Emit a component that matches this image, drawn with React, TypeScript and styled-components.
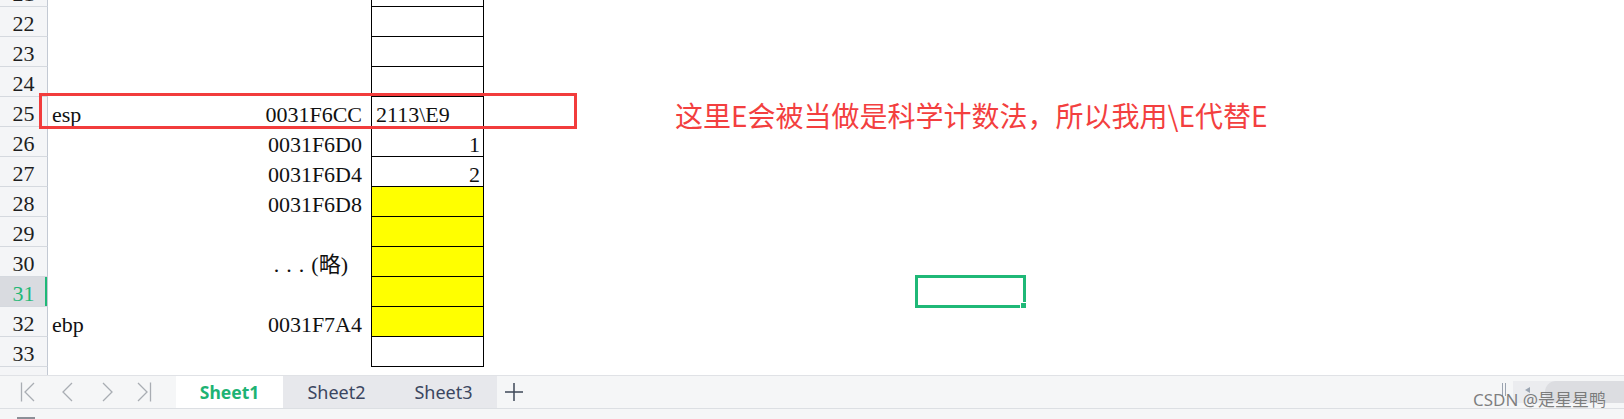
import React from 'react';
import styled, { createGlobalStyle } from 'styled-components';

const Global = createGlobalStyle`
  html, body { margin: 0; padding: 0; background: #ffffff; }
  body { width: 1624px; height: 419px; overflow: hidden; }
`;

const Page = styled.div`
  position: relative;
  width: 1624px;
  height: 419px;
  overflow: hidden;
  display: flex;
  flex-direction: column;
  background: #ffffff;
`;

const Grid = styled.div`
  flex: none;
  height: 375px;
  overflow: hidden;
`;

const Rows = styled.div`
  margin-top: -23px;
  display: flex;
  flex-direction: column;
`;

const Row = styled.div`
  display: grid;
  grid-template-columns: 48px 192px 131px 113px 1fr;
  height: 30px;
  font-family: 'Liberation Serif', 'Noto Sans CJK SC', serif;
  font-size: 22px;
  color: #111111;
`;

const RowHead = styled.div<{ $selected?: boolean }>`
  box-sizing: border-box;
  display: flex;
  align-items: flex-end;
  justify-content: center;
  line-height: 22px;
  padding-bottom: 1px;
  background: ${(p) => (p.$selected ? '#d9dbe0' : '#f4f5f7')};
  color: ${(p) => (p.$selected ? '#1fb877' : '#1e1e1e')};
  border-bottom: 1px solid #d5d9df;
  border-right: 1px solid #c3c9d3;
  box-shadow: ${(p) => (p.$selected ? 'inset -2px 0 0 #1fb877' : 'none')};
`;

const Cell = styled.div<{ $align?: 'left' | 'right'; $pad?: number }>`
  box-sizing: border-box;
  display: flex;
  align-items: flex-end;
  justify-content: ${(p) => (p.$align === 'right' ? 'flex-end' : 'flex-start')};
  line-height: 22px;
  padding: 0 ${(p) => (p.$align === 'right' ? p.$pad ?? 9 : 0)}px 1px
    ${(p) => (p.$align === 'right' ? 0 : p.$pad ?? 4)}px;
  white-space: nowrap;
`;

const BoxCell = styled.div<{ $boxed: boolean; $fill?: boolean; $align?: 'left' | 'right' }>`
  box-sizing: border-box;
  display: flex;
  align-items: flex-end;
  justify-content: ${(p) => (p.$align === 'right' ? 'flex-end' : 'flex-start')};
  line-height: 22px;
  padding: 0 3px 0 4px;
  background: ${(p) => (p.$fill ? '#ffff00' : 'transparent')};
  border-left: ${(p) => (p.$boxed ? '1px solid #000' : '1px solid transparent')};
  border-right: ${(p) => (p.$boxed ? '1px solid #000' : '1px solid transparent')};
  border-bottom: ${(p) => (p.$boxed ? '1px solid #000' : '1px solid transparent')};
  white-space: nowrap;
`;

const Dots = styled.span`
  letter-spacing: 7px;
`;

const Note = styled.span`
  margin-right: 14px;
`;

const TabBar = styled.div`
  flex: none;
  box-sizing: border-box;
  height: 34px;
  display: flex;
  align-items: stretch;
  background: #f5f6f7;
  border-top: 1px solid #e0e2e6;
  border-bottom: 1px solid #dcdfe3;
`;

const Nav = styled.div`
  width: 176px;
  flex: none;
  box-sizing: border-box;
  display: flex;
  align-items: center;
  gap: 24px;
  padding-left: 20px;
`;

const NavIcon = styled.svg`
  width: 16px;
  height: 20px;
  overflow: visible;
  flex: none;
`;

const Tab = styled.div<{ $active?: boolean }>`
  width: 107px;
  flex: none;
  display: flex;
  align-items: center;
  justify-content: center;
  background: ${(p) => (p.$active ? '#ffffff' : '#e7e8ec')};
  color: ${(p) => (p.$active ? '#1db374' : '#3b4660')};
  font-family: 'Noto Sans', 'Open Sans', sans-serif;
  font-size: ${(p) => (p.$active ? '17.5px' : '18px')};
  font-weight: ${(p) => (p.$active ? 700 : 400)};
`;

const AddButton = styled.div`
  width: 34px;
  flex: none;
  display: flex;
  align-items: center;
  justify-content: center;
`;

const Spacer = styled.div`
  flex: 1;
`;

const Splitter = styled.div`
  flex: none;
  width: 12px;
  margin-right: 3px;
  display: flex;
  align-items: center;
  justify-content: center;
  gap: 2px;
`;

const SplitLine = styled.div`
  width: 1px;
  height: 13px;
  background: #9aa3b0;
  margin-top: -6px;
`;

const Scroll = styled.div`
  flex: none;
  width: 111px;
  align-self: center;
  height: 22px;
  display: flex;
  align-items: center;
  padding-left: 12px;
  box-sizing: border-box;
  background: #ebecef;
`;

const Arrow = styled.div`
  width: 0;
  height: 0;
  border-top: 3px solid transparent;
  border-bottom: 3px solid transparent;
  border-right: 5px solid #9aa4b1;
  margin-top: -4px;
`;

const Thumb = styled.div`
  flex: 1;
  height: 100%;
  margin-left: 15px;
  background: #dcdde1;
  border-radius: 11px 0 0 11px;
`;

const StatusBar = styled.div`
  flex: 1;
  background: #f5f6f7;
  display: flex;
  align-items: flex-end;
`;

const StatusIcon = styled.div`
  width: 18px;
  height: 2px;
  margin-left: 17px;
  background: #8c9098;
`;

const RedBox = styled.div`
  position: absolute;
  left: 39px;
  top: 93px;
  width: 538px;
  height: 36px;
  box-sizing: border-box;
  border: 3px solid #f23c3c;
  pointer-events: none;
`;

const RedNote = styled.div`
  position: absolute;
  left: 675px;
  top: 101px;
  font-family: 'Noto Sans CJK SC', 'Noto Sans', sans-serif;
  font-size: 28px;
  line-height: 28px;
  color: #f33f3f;
  white-space: nowrap;
`;

const Selection = styled.div`
  position: absolute;
  left: 915px;
  top: 275px;
  width: 111px;
  height: 33px;
  box-sizing: border-box;
  border: 3px solid #1fb877;
`;

const Handle = styled.div`
  position: absolute;
  right: -3px;
  bottom: -3px;
  width: 5px;
  height: 5px;
  background: #1fb877;
  border-left: 1px solid #fff;
  border-top: 1px solid #fff;
`;

const Watermark = styled.div`
  position: absolute;
  left: 1473px;
  top: 391px;
  font-family: 'Noto Sans', 'Noto Sans CJK SC', sans-serif;
  font-size: 17px;
  line-height: 17px;
  color: rgba(105, 105, 105, 0.85);
  white-space: nowrap;
`;

type RowData = {
  n: number;
  label?: boolean;
  a?: string;
  b?: React.ReactNode;
  c?: string;
  cAlign?: 'left' | 'right';
  fill?: boolean;
};

const rows: RowData[] = [
  { n: 21 },
  { n: 22 },
  { n: 23 },
  { n: 24 },
  { n: 25, a: 'esp', b: '0031F6CC', c: '2113\\E9', cAlign: 'left' },
  { n: 26, b: '0031F6D0', c: '1', cAlign: 'right' },
  { n: 27, b: '0031F6D4', c: '2', cAlign: 'right' },
  { n: 28, b: '0031F6D8', fill: true },
  { n: 29, fill: true },
  {
    n: 30,
    b: (
      <Note>
        <Dots>...</Dots>(略)
      </Note>
    ),
    fill: true,
  },
  { n: 31, fill: true },
  { n: 32, a: 'ebp', b: '0031F7A4', fill: true },
  { n: 33 },
  { n: 34, label: false },
];

const stroke = { stroke: '#a9adb3', strokeWidth: 1.3, fill: 'none' };

export default function App() {
  return (
    <Page>
      <Global />
      <Grid>
        <Rows>
          {rows.map((r) => (
            <Row key={r.n}>
              <RowHead $selected={r.n === 31}>{r.label === false ? null : r.n}</RowHead>
              <Cell $align="left">{r.a}</Cell>
              <Cell $align="right">{r.b}</Cell>
              <BoxCell $boxed={r.n <= 33} $fill={r.fill} $align={r.cAlign}>
                {r.c}
              </BoxCell>
              <div />
            </Row>
          ))}
        </Rows>
      </Grid>
      <TabBar>
        <Nav>
          <NavIcon viewBox="0 0 16 20">
            <line x1="1.5" y1="0.5" x2="1.5" y2="19.5" {...stroke} />
            <polyline points="14,1 5,10 14,19" {...stroke} />
          </NavIcon>
          <NavIcon viewBox="0 0 16 20">
            <polyline points="12,1 3,10 12,19" {...stroke} />
          </NavIcon>
          <NavIcon viewBox="0 0 16 20">
            <polyline points="3,1 12,10 3,19" {...stroke} />
          </NavIcon>
          <NavIcon viewBox="0 0 16 20">
            <polyline points="-2,1 7,10 -2,19" {...stroke} />
            <line x1="10.5" y1="0.5" x2="10.5" y2="19.5" {...stroke} />
          </NavIcon>
        </Nav>
        <Tab $active>Sheet1</Tab>
        <Tab>Sheet2</Tab>
        <Tab>Sheet3</Tab>
        <AddButton>
          <svg width="20" height="20" viewBox="0 0 20 20">
            <line x1="10" y1="1" x2="10" y2="19" stroke="#3d4757" strokeWidth="1.5" />
            <line x1="1" y1="10" x2="19" y2="10" stroke="#3d4757" strokeWidth="1.5" />
          </svg>
        </AddButton>
        <Spacer />
        <Splitter>
          <SplitLine />
          <SplitLine />
        </Splitter>
        <Scroll>
          <Arrow />
          <Thumb />
        </Scroll>
      </TabBar>
      <StatusBar>
        <StatusIcon />
      </StatusBar>

      <RedBox />
      <RedNote>这里E会被当做是科学计数法，所以我用\E代替E</RedNote>
      <Selection>
        <Handle />
      </Selection>
      <Watermark>CSDN @是星星鸭</Watermark>
    </Page>
  );
}
